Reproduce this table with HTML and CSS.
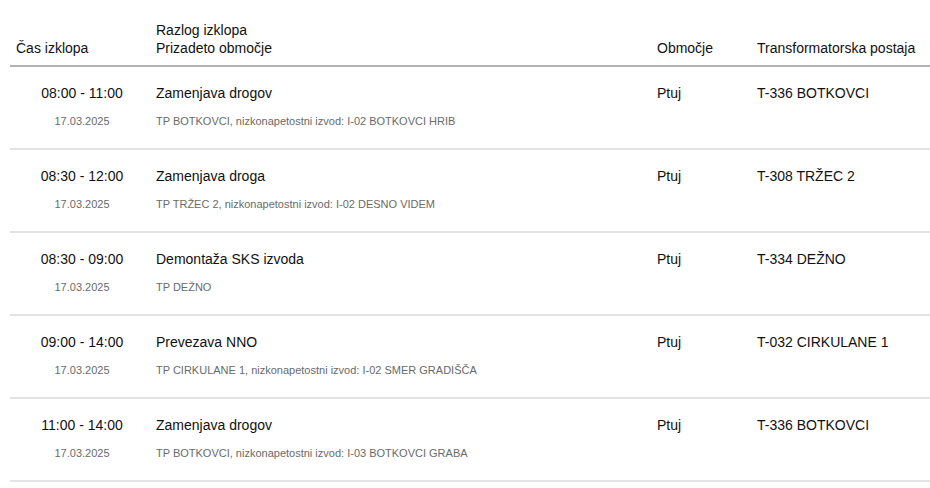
FILE: index.html
```html
<!DOCTYPE html>
<html lang="sl">
<head>
<meta charset="utf-8">
<link rel="stylesheet" href="styles.css">
</head>
<body>
<table class="outages">
  <thead>
    <tr>
      <th class="c-time">Čas izklopa</th>
      <th class="c-reason">Razlog izklopa<br>Prizadeto območje</th>
      <th class="c-area">Območje</th>
      <th class="c-tp">Transformatorska postaja</th>
    </tr>
  </thead>
  <tbody>
    <tr>
      <td class="c-time"><div class="main">08:00 - 11:00</div><div class="sub">17.03.2025</div></td>
      <td class="c-reason"><div class="main">Zamenjava drogov</div><div class="sub">TP BOTKOVCI, nizkonapetostni izvod: I-02 BOTKOVCI HRIB</div></td>
      <td class="c-area"><div class="main">Ptuj</div></td>
      <td class="c-tp"><div class="main">T-336 BOTKOVCI</div></td>
    </tr>
    <tr>
      <td class="c-time"><div class="main">08:30 - 12:00</div><div class="sub">17.03.2025</div></td>
      <td class="c-reason"><div class="main">Zamenjava droga</div><div class="sub">TP TRŽEC 2, nizkonapetostni izvod: I-02 DESNO VIDEM</div></td>
      <td class="c-area"><div class="main">Ptuj</div></td>
      <td class="c-tp"><div class="main">T-308 TRŽEC 2</div></td>
    </tr>
    <tr>
      <td class="c-time"><div class="main">08:30 - 09:00</div><div class="sub">17.03.2025</div></td>
      <td class="c-reason"><div class="main">Demontaža SKS izvoda</div><div class="sub">TP DEŽNO</div></td>
      <td class="c-area"><div class="main">Ptuj</div></td>
      <td class="c-tp"><div class="main">T-334 DEŽNO</div></td>
    </tr>
    <tr>
      <td class="c-time"><div class="main">09:00 - 14:00</div><div class="sub">17.03.2025</div></td>
      <td class="c-reason"><div class="main">Prevezava NNO</div><div class="sub">TP CIRKULANE 1, nizkonapetostni izvod: I-02 SMER GRADIŠČA</div></td>
      <td class="c-area"><div class="main">Ptuj</div></td>
      <td class="c-tp"><div class="main">T-032 CIRKULANE 1</div></td>
    </tr>
    <tr>
      <td class="c-time"><div class="main">11:00 - 14:00</div><div class="sub">17.03.2025</div></td>
      <td class="c-reason"><div class="main">Zamenjava drogov</div><div class="sub">TP BOTKOVCI, nizkonapetostni izvod: I-03 BOTKOVCI GRABA</div></td>
      <td class="c-area"><div class="main">Ptuj</div></td>
      <td class="c-tp"><div class="main">T-336 BOTKOVCI</div></td>
    </tr>
  </tbody>
</table>
</body>
</html>
```

FILE: styles.css
```css
html, body {
  margin: 0;
  padding: 0;
  background: #fff;
}
body {
  font-family: "Liberation Sans", Arial, sans-serif;
  font-size: 14px;
  line-height: 18px;
  color: #111;
  padding-left: 10px;
  overflow: hidden;
}
.outages {
  border-collapse: collapse;
  width: 920px;
  table-layout: fixed;
}
.outages th {
  font-weight: normal;
  text-align: left;
  vertical-align: bottom;
  padding: 21px 6px 8px;
  border-bottom: 2px solid #b3b3b3;
}
.outages td {
  vertical-align: top;
  padding: 17px 6px 20px;
  border-bottom: 2px solid #e3e3e3;
}
.c-time { width: 128px; }
.c-reason { width: 489px; }
.c-area { width: 88px; }
td.c-time {
  text-align: center;
  padding-left: 8px;
  padding-right: 4px;
}
.sub {
  font-size: 11px;
  line-height: 14px;
  color: #6a6a6a;
  margin-top: 12px;
}
```
